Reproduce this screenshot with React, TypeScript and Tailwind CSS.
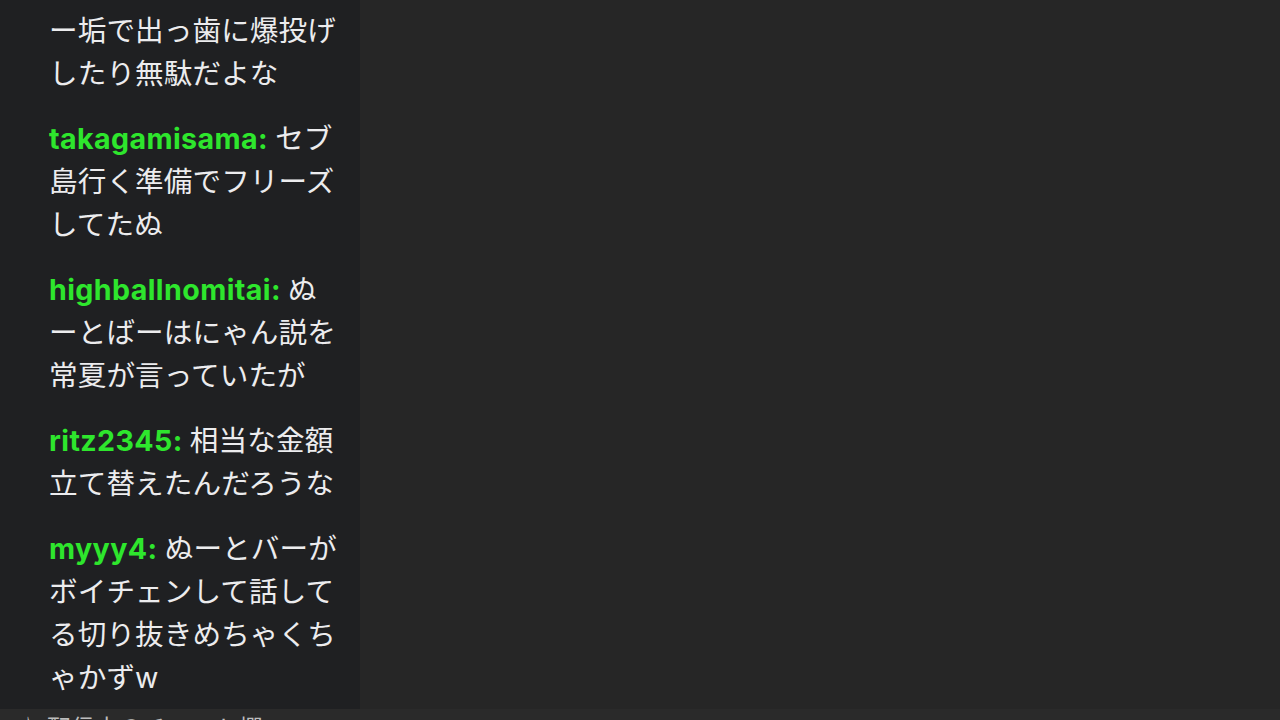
import React from "react";

const msgs: { user?: string; text: string }[] = [
  { text: "ー垢で出っ歯に爆投げしたり無駄だよな" },
  { user: "takagamisama", text: "セブ島行く準備でフリーズしてたぬ" },
  { user: "highballnomitai", text: "ぬーとばーはにゃん説を常夏が言っていたが" },
  { user: "ritz2345", text: "相当な金額立て替えたんだろうな" },
  { user: "myyy4", text: "ぬーとバーがボイチェンして話してる切り抜きめちゃくちゃかずw" },
];

export default function App() {
  return (
    <div
      className="w-[1280px] h-[720px] bg-[#262626] overflow-hidden flex flex-col"
      style={{ fontFamily: '"Inter", "Noto Sans CJK JP", sans-serif' }}
    >
      <div className="flex flex-1 min-h-0">
        <div className="w-[360px] bg-[#1f2022] pl-[49px] pr-[20px] pt-[9px] flex flex-col gap-[22px]">
          {msgs.map((m, i) => (
            <div
              key={i}
              className="text-[28.6px] leading-[43px] text-[#ececee] break-all w-[291px] tracking-[0.1px]"
            >
              {m.user && (
                <span className="font-bold text-[#2ee62d] tracking-[0.4px]">{m.user}:&nbsp;</span>
              )}
              {m.text}
            </div>
          ))}
        </div>
        <div className="flex-1" />
      </div>
      <div className="h-[11px] bg-[#2a2a2a] overflow-hidden pl-[16px]">
        <div className="text-[24px] leading-[24px] mt-[8px] text-[#bdbdbd] whitespace-nowrap">
          ♪ 配信中のチャット欄
        </div>
      </div>
    </div>
  );
}
